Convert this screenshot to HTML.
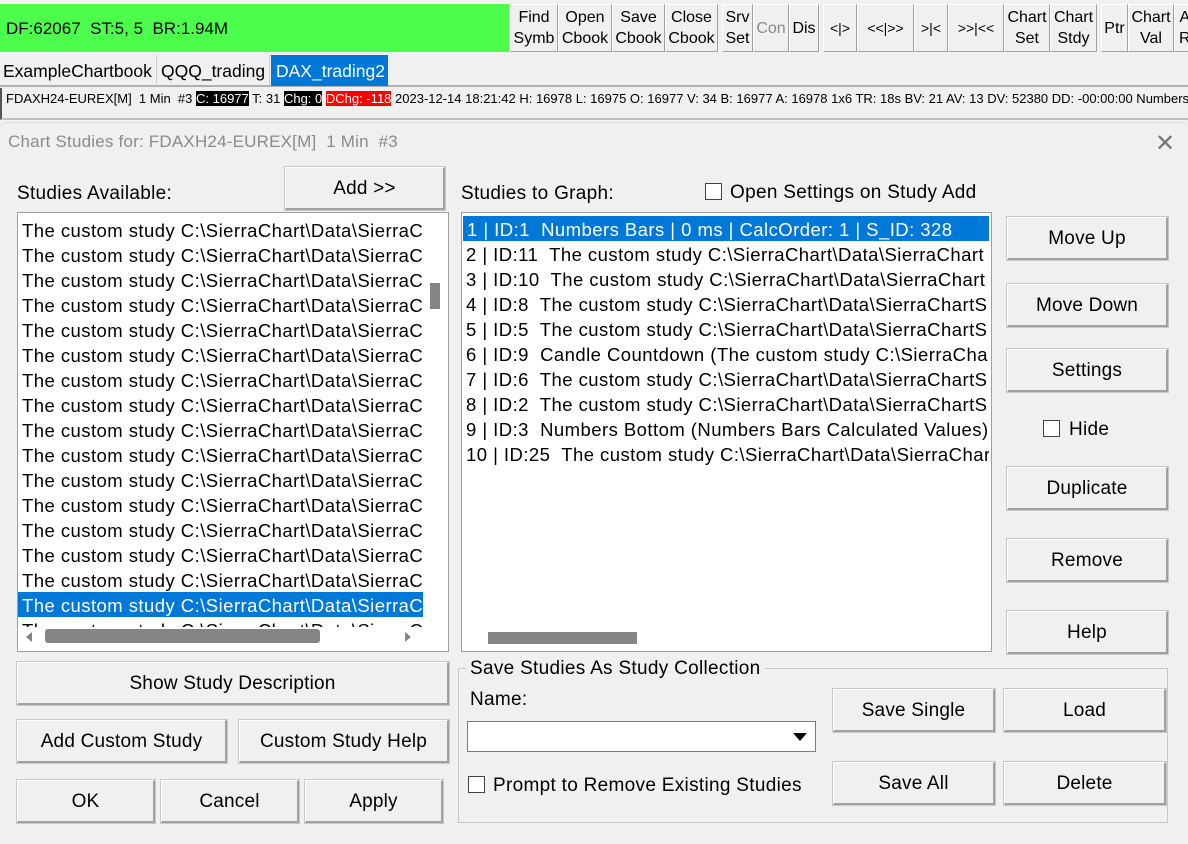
<!DOCTYPE html>
<html><head><meta charset="utf-8"><style>
*{box-sizing:border-box;margin:0;padding:0}
body{width:1188px;height:844px;background:#f0f0f0;font-family:"Liberation Sans",sans-serif;position:relative;overflow:hidden;color:#000}
.a{position:absolute}
.tb{position:absolute;top:4px;height:48px;border:1px solid #fff;border-right-color:#a0a0a0;border-bottom-color:#a0a0a0;background:#f0f0f0;font-size:16px;text-align:center;line-height:21px;display:flex;align-items:center;justify-content:center;white-space:nowrap;overflow:hidden}
.btn{position:absolute;border:1px solid #fff;border-right:2px solid #a0a0a0;border-bottom:2px solid #a0a0a0;outline:1px solid #c8c8c8;background:#f0f0f0;font-size:19px;letter-spacing:0.2px;display:flex;align-items:center;justify-content:center;white-space:nowrap;padding-top:2px}
.list{position:absolute;background:#fff;border:1px solid #a0a0a0;overflow:hidden}
.row{height:25px;line-height:27px;font-size:18.5px;letter-spacing:0.45px;white-space:nowrap;padding-left:4px}
.sel{background:#0078d7;color:#fff}
.cb{position:absolute;width:17px;height:17px;border:1px solid #444;background:#fff}
.lbl{position:absolute;font-size:19px;letter-spacing:0.3px;white-space:nowrap}
</style></head><body>
<div class="a" style="left:0;top:4px;width:509px;height:48px;background:#4cfd4c;font-size:17px;line-height:50px;padding-left:6px">DF:62067&nbsp; ST:5, 5&nbsp; BR:1.94M</div>
<div class="tb" style="left:510px;width:48px">Find<br>Symb</div>
<div class="tb" style="left:558px;width:54px">Open<br>Cbook</div>
<div class="tb" style="left:612px;width:53px">Save<br>Cbook</div>
<div class="tb" style="left:665px;width:53px">Close<br>Cbook</div>
<div class="tb" style="left:722px;width:31px">Srv<br>Set</div>
<div class="tb" style="left:753px;width:36px;color:#888">Con</div>
<div class="tb" style="left:789px;width:30px">Dis</div>
<div class="tb" style="left:823px;width:34px;font-size:14px">&lt;|&gt;</div>
<div class="tb" style="left:857px;width:57px;font-size:14px">&lt;&lt;|&gt;&gt;</div>
<div class="tb" style="left:914px;width:34px;font-size:14px">&gt;|&lt;</div>
<div class="tb" style="left:948px;width:56px;font-size:14px">&gt;&gt;|&lt;&lt;</div>
<div class="tb" style="left:1004px;width:46px">Chart<br>Set</div>
<div class="tb" style="left:1050px;width:47px">Chart<br>Stdy</div>
<div class="tb" style="left:1101px;width:27px">Ptr</div>
<div class="tb" style="left:1128px;width:46px">Chart<br>Val</div>
<div class="tb" style="left:1174px;width:20px;justify-content:flex-start;padding-left:4px">A<br>R</div>
<div class="a" style="left:0;top:54px;width:1188px;height:33px;border-bottom:2px solid #b0b0b0"></div>
<div class="a" style="left:0;top:55px;width:157px;height:31px;font-size:17.5px;line-height:33px;padding-left:3px;border-right:1px solid #ccc">ExampleChartbook</div>
<div class="a" style="left:158px;top:55px;width:112px;height:31px;font-size:17.5px;line-height:33px;padding-left:3px;border-right:1px solid #ccc">QQQ_trading</div>
<div class="a" style="left:271px;top:55px;width:117px;height:31px;font-size:17.5px;line-height:33px;padding-left:5px;background:#0078d7;color:#fff">DAX_trading2</div>
<div class="a" style="left:0;top:88px;width:1188px;height:32px;border-left:2px solid #555;border-bottom:2px solid #c0c0c0"></div>
<div class="a" style="left:6px;top:90px;font-size:13px;white-space:nowrap;line-height:17px">FDAXH24-EUREX[M]&nbsp; 1 Min&nbsp; #3 <span style="background:#000;color:#fff">C: 16977</span> T: 31 <span style="background:#000;color:#fff">Chg: 0</span> <span style="background:#f00;color:#fff">DChg: -118</span> 2023-12-14 18:21:42 H: 16978 L: 16975 O: 16977 V: 34 B: 16977 A: 16978 1x6 TR: 18s BV: 21 AV: 13 DV: 52380 DD: -00:00:00 Numbers</div>
<div class="a" style="left:0;top:122px;width:1188px;height:722px;border-top:1px solid #d8d8d8;border-radius:8px 8px 0 0;background:#f0f0f0"></div>
<div class="a" style="left:8px;top:132px;font-size:17px;letter-spacing:0.2px;color:#8a8a8a">Chart Studies for: FDAXH24-EUREX[M]&nbsp; 1 Min&nbsp; #3</div>
<div class="a" style="left:1155px;top:129px;font-size:24px;color:#777;font-weight:300">✕</div>

<div class="lbl" style="left:17px;top:183px">Studies Available:</div>
<div class="btn" style="left:285px;top:167px;width:160px;height:43px">Add &gt;&gt;</div>
<div class="list" style="left:17px;top:212px;width:432px;height:440px;padding-top:4px">
<div style="width:405px;overflow:hidden">
<div class="row">The custom study C:\SierraChart\Data\SierraChart</div><div class="row">The custom study C:\SierraChart\Data\SierraChart</div><div class="row">The custom study C:\SierraChart\Data\SierraChart</div><div class="row">The custom study C:\SierraChart\Data\SierraChart</div><div class="row">The custom study C:\SierraChart\Data\SierraChart</div><div class="row">The custom study C:\SierraChart\Data\SierraChart</div><div class="row">The custom study C:\SierraChart\Data\SierraChart</div><div class="row">The custom study C:\SierraChart\Data\SierraChart</div><div class="row">The custom study C:\SierraChart\Data\SierraChart</div><div class="row">The custom study C:\SierraChart\Data\SierraChart</div><div class="row">The custom study C:\SierraChart\Data\SierraChart</div><div class="row">The custom study C:\SierraChart\Data\SierraChart</div><div class="row">The custom study C:\SierraChart\Data\SierraChart</div><div class="row">The custom study C:\SierraChart\Data\SierraChart</div><div class="row">The custom study C:\SierraChart\Data\SierraChart</div><div class="row sel">The custom study C:\SierraChart\Data\SierraChart</div><div class="row">The custom study C:\SierraChart\Data\SierraChart</div>
</div>
<div class="a" style="left:409px;top:0;width:22px;height:414px;background:#fff"></div>
<div class="a" style="left:412px;top:70px;width:10px;height:26px;background:#858585"></div>
<div class="a" style="left:0;top:414px;width:431px;height:24px;background:#fff"></div>
<div class="a" style="left:8px;top:419px;width:0;height:0;border-top:5px solid transparent;border-bottom:5px solid transparent;border-right:6px solid #858585"></div>
<div class="a" style="left:27px;top:416px;width:275px;height:14px;background:#858585;border-radius:3px"></div>
<div class="a" style="left:387px;top:419px;width:0;height:0;border-top:5px solid transparent;border-bottom:5px solid transparent;border-left:6px solid #858585"></div>
</div>

<div class="lbl" style="left:461px;top:183px">Studies to Graph:</div>
<div class="cb" style="left:705px;top:183px"></div>
<div class="lbl" style="left:730px;top:182px">Open Settings on Study Add</div>
<div class="list" style="left:461px;top:212px;width:531px;height:440px;padding-top:3px">
<div class="row sel" style="margin:0 1px">1 | ID:1&nbsp; Numbers Bars | 0 ms | CalcOrder: 1 | S_ID: 328</div>
<div class="row">2 | ID:11&nbsp; The custom study C:\SierraChart\Data\SierraChart</div>
<div class="row">3 | ID:10&nbsp; The custom study C:\SierraChart\Data\SierraChart</div>
<div class="row">4 | ID:8&nbsp; The custom study C:\SierraChart\Data\SierraChartS</div>
<div class="row">5 | ID:5&nbsp; The custom study C:\SierraChart\Data\SierraChartS</div>
<div class="row">6 | ID:9&nbsp; Candle Countdown (The custom study C:\SierraChart</div>
<div class="row">7 | ID:6&nbsp; The custom study C:\SierraChart\Data\SierraChartS</div>
<div class="row">8 | ID:2&nbsp; The custom study C:\SierraChart\Data\SierraChartS</div>
<div class="row">9 | ID:3&nbsp; Numbers Bottom (Numbers Bars Calculated Values)</div>
<div class="row">10 | ID:25&nbsp; The custom study C:\SierraChart\Data\SierraChart</div>
<div class="a" style="left:527px;top:0;width:3px;height:440px;background:#fff"></div>
<div class="a" style="left:26px;top:419px;width:149px;height:12px;background:#858585"></div>
</div>

<div class="btn" style="left:1007px;top:217px;width:161px;height:43px">Move Up</div>
<div class="btn" style="left:1007px;top:284px;width:161px;height:43px">Move Down</div>
<div class="btn" style="left:1007px;top:349px;width:161px;height:43px">Settings</div>
<div class="cb" style="left:1043px;top:420px"></div>
<div class="lbl" style="left:1069px;top:419px">Hide</div>
<div class="btn" style="left:1007px;top:467px;width:161px;height:43px">Duplicate</div>
<div class="btn" style="left:1007px;top:539px;width:161px;height:43px">Remove</div>
<div class="btn" style="left:1007px;top:611px;width:161px;height:43px">Help</div>

<div class="btn" style="left:17px;top:662px;width:432px;height:43px">Show Study Description</div>
<div class="btn" style="left:17px;top:720px;width:210px;height:43px">Add Custom Study</div>
<div class="btn" style="left:239px;top:720px;width:210px;height:43px">Custom Study Help</div>
<div class="btn" style="left:17px;top:780px;width:138px;height:43px">OK</div>
<div class="btn" style="left:161px;top:780px;width:138px;height:43px">Cancel</div>
<div class="btn" style="left:305px;top:780px;width:138px;height:43px">Apply</div>

<div class="a" style="left:458px;top:668px;width:710px;height:155px;border:1px solid #c8c8c8"></div>
<div class="lbl" style="left:466px;top:658px;background:#f0f0f0;padding:0 4px">Save Studies As Study Collection</div>
<div class="lbl" style="left:470px;top:689px">Name:</div>
<div class="a" style="left:467px;top:721px;width:349px;height:31px;background:#fff;border:1px solid #7a7a7a"></div>
<div class="a" style="left:793px;top:733px;width:0;height:0;border-left:7px solid transparent;border-right:7px solid transparent;border-top:8px solid #000"></div>
<div class="cb" style="left:468px;top:776px"></div>
<div class="lbl" style="left:493px;top:775px">Prompt to Remove Existing Studies</div>
<div class="btn" style="left:833px;top:689px;width:162px;height:43px">Save Single</div>
<div class="btn" style="left:1004px;top:689px;width:162px;height:43px">Load</div>
<div class="btn" style="left:833px;top:762px;width:162px;height:43px">Save All</div>
<div class="btn" style="left:1004px;top:762px;width:162px;height:43px">Delete</div>
</body></html>
